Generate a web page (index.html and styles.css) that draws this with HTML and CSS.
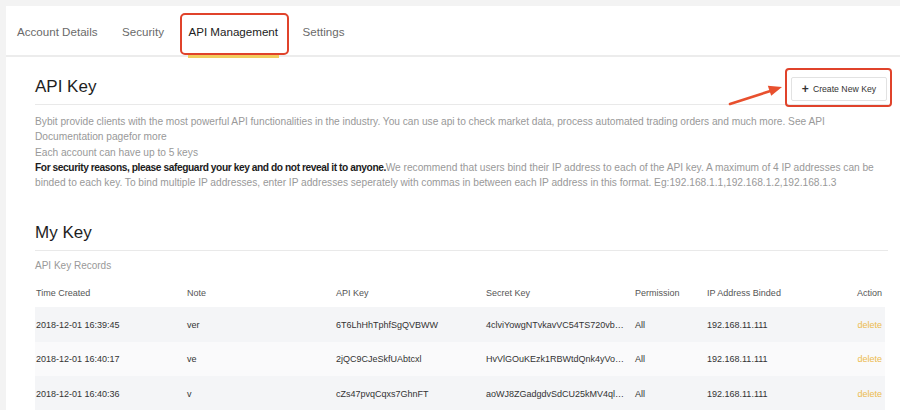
FILE: index.html
```html
<!DOCTYPE html>
<html>
<head>
<meta charset="utf-8">
<link rel="stylesheet" href="styles.css">
</head>
<body>
<div class="page">
  <nav class="tabs">
    <div class="tab">Account Details</div>
    <div class="tab">Security</div>
    <div class="tab active">API Management</div>
    <div class="tab">Settings</div>
  </nav>
  <main class="content">
    <div class="sec-head">
      <h2 class="sec-title">API Key</h2>
      <div class="btn-wrap">
        <svg class="arrow" width="60" height="24" viewBox="0 0 60 24">
          <line x1="4" y1="21" x2="46" y2="7.5" stroke="#e8502e" stroke-width="2.6" stroke-linecap="round"/>
          <polygon points="56,4 45.2,12.8 41.8,2.8" fill="#e8502e"/>
        </svg>
        <button class="btn"><span class="plus">+</span>Create New Key</button>
      </div>
    </div>
    <div class="desc">
      <p>Bybit provide clients with the most powerful API functionalities in the industry. You can use api to check market data, process automated trading orders and much more. See API Documentation pagefor more</p>
      <p>Each account can have up to 5 keys</p>
      <p><strong>For security reasons, please safeguard your key and do not reveal it to anyone.</strong> We recommend that users bind their IP address to each of the API key. A maximum of 4 IP addresses can be binded to each key. To bind multiple IP addresses, enter IP addresses seperately with commas in between each IP address in this format. Eg:192.168.1.1,192.168.1.2,192.168.1.3</p>
    </div>
    <div class="sec-head sec-head-2">
      <h2 class="sec-title">My Key</h2>
    </div>
    <div class="records">API Key Records</div>
    <table class="keys">
      <colgroup>
        <col class="c1"><col class="c2"><col class="c3"><col class="c4"><col class="c5"><col class="c6"><col class="c7">
      </colgroup>
      <thead>
        <tr><th>Time Created</th><th>Note</th><th>API Key</th><th>Secret Key</th><th>Permission</th><th>IP Address Binded</th><th class="act">Action</th></tr>
      </thead>
      <tbody>
        <tr><td>2018-12-01 16:39:45</td><td>ver</td><td>6T6LhHhTphfSgQVBWW</td><td class="secret">4clviYowgNTvkavVC54TS720vbJkhfXq2Lm</td><td>All</td><td>192.168.11.111</td><td class="act"><span class="del">delete</span></td></tr>
        <tr><td>2018-12-01 16:40:17</td><td>ve</td><td>2jQC9CJeSkfUAbtcxl</td><td class="secret">HvVlGOuKEzk1RBWtdQnk4yVoEKz8Pw</td><td>All</td><td>192.168.11.111</td><td class="act"><span class="del">delete</span></td></tr>
        <tr><td>2018-12-01 16:40:36</td><td>v</td><td>cZs47pvqCqxs7GhnFT</td><td class="secret">aoWJ8ZGadgdvSdCU25kMV4qlUnR3tY</td><td>All</td><td>192.168.11.111</td><td class="act"><span class="del">delete</span></td></tr>
      </tbody>
    </table>
  </main>
</div>
</body>
</html>
```

FILE: styles.css
```css
* { box-sizing: border-box; }
html, body { margin: 0; padding: 0; }
body {
  background: #f3f3f3;
  font-family: "Liberation Sans", Arial, sans-serif;
  color: #333;
  overflow: hidden;
}
.page {
  margin: 6px 0 0 6px;
  background: #fff;
  height: 404px;
}
.tabs {
  display: flex;
  gap: 24.5px;
  padding-left: 11px;
  height: 51px;
  border-bottom: 2px solid #ececec;
}
.tab {
  position: relative;
  display: flex;
  align-items: center;
  padding-top: 1px;
  font-size: 11.6px;
  color: #6a6a6a;
}
.tab.active { color: #222; }
.tab.active::before {
  content: "";
  position: absolute;
  left: -8px;
  right: -11px;
  top: 7px;
  bottom: 0px;
  border: 2px solid #e0432b;
  border-radius: 5px;
}
.tab.active::after {
  content: "";
  position: absolute;
  left: 0;
  right: -1px;
  bottom: -3px;
  height: 3px;
  background: #f2cd5e;
}
.content {
  padding: 16px 12px 0 29px;
}
.sec-head {
  display: flex;
  align-items: center;
  justify-content: space-between;
  height: 32px;
  padding-bottom: 4px;
  border-bottom: 1px solid #e9e9e9;
}
.sec-title {
  margin: 0;
  font-size: 17px;
  font-weight: normal;
  color: #1e1e1e;
  line-height: 28px;
}
.btn-wrap {
  position: relative;
  margin-right: 1px;
  margin-top: 4px;
}
.btn {
  display: flex;
  align-items: center;
  justify-content: center;
  width: 96px;
  height: 24px;
  border: 1px solid #e2e2e2;
  border-radius: 2px;
  background: #fff;
  font-family: "Liberation Sans", Arial, sans-serif;
  font-size: 8.7px;
  color: #333;
  padding: 0;
}
.plus {
  font-size: 12px;
  font-weight: bold;
  margin-right: 4px;
  line-height: 1;
}
.btn-wrap::before {
  content: "";
  position: absolute;
  left: -6px;
  right: -5px;
  top: -9px;
  bottom: -6px;
  border: 2px solid #e0432b;
  border-radius: 4px;
}
.arrow {
  position: absolute;
  left: -65px;
  top: 6px;
}
.desc {
  margin-top: 9px;
  font-size: 10.2px;
  line-height: 15.3px;
  color: #999;
  width: 853px;
  word-spacing: -0.1px;
}
.desc p { margin: 0; }
.desc strong {
  color: #1c1c1c;
  font-weight: bold;
  letter-spacing: -0.4px;
  margin-right: -3px;
}
.sec-head-2 { margin-top: 29px; }
.records {
  margin-top: 7px;
  font-size: 10px;
  line-height: 16px;
  color: #999;
}
.keys {
  margin-top: 5px;
  width: 850px;
  table-layout: fixed;
  border-collapse: collapse;
  font-size: 9px;
}
.c1 { width: 151px; }
.c2 { width: 149px; }
.c3 { width: 150px; }
.c4 { width: 149px; }
.c5 { width: 72px; }
.c6 { width: 120px; }
.c7 { width: 59px; }
.keys th {
  height: 28px;
  text-align: left;
  font-weight: normal;
  color: #555;
  padding: 0 1px;
}
.keys td {
  height: 34.5px;
  padding: 0 1px;
  color: #333;
  white-space: nowrap;
  overflow: hidden;
}
.keys td.secret {
  text-overflow: ellipsis;
  padding-right: 7px;
}
.keys .act {
  text-align: right;
  padding-right: 3px;
}
.keys tbody tr:nth-child(odd) { background: #f4f5f7; }
.keys tbody tr:nth-child(even) { background: #fafafb; }
.del { color: #ecbb4e; }
```
